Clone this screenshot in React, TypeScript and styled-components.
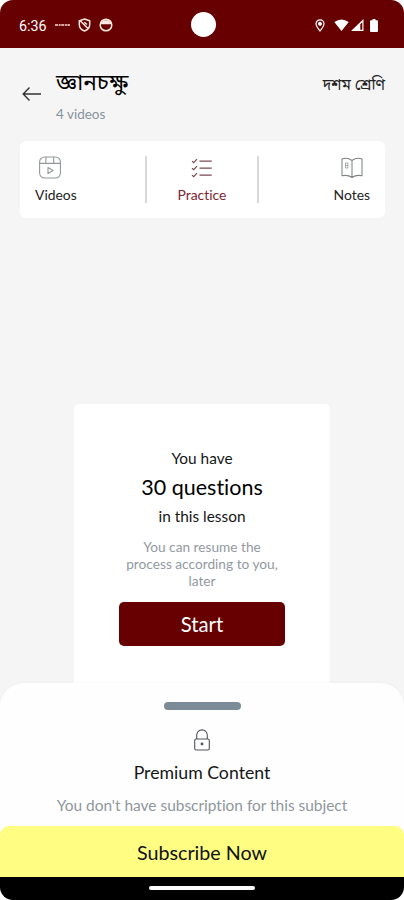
import React from 'react';
import styled, { createGlobalStyle } from 'styled-components';

const maroon = '#670001';

const GlobalStyle = createGlobalStyle`
  * { box-sizing: border-box; }
  html, body { margin: 0; padding: 0; background: #fff; overflow: hidden; }
  button { font: inherit; border: 0; padding: 0; margin: 0; background: none; color: inherit; }
  svg { display: block; flex: none; }
`;

const Screen = styled.div`
  width: 404px;
  height: 900px;
  display: flex;
  flex-direction: column;
  overflow: hidden;
  border-radius: 13px;
  background: #f5f5f5;
  color: #161616;
  font-family: Lato, 'Noto Sans Bengali', 'Noto Sans', sans-serif;
  font-variant-ligatures: no-common-ligatures;
  white-space: nowrap;
`;

const StatusBar = styled.div`
  height: 48px;
  flex: none;
  display: grid;
  grid-template-columns: 1fr 25px 1fr;
  align-items: center;
  padding: 0 26px 0 19px;
  background: ${maroon};
  color: #fff;
`;

const StatusGroup = styled.div<{ $end?: boolean }>`
  display: flex;
  align-items: center;
  justify-content: ${p => (p.$end ? 'flex-end' : 'flex-start')};
  padding-top: 2px;
`;

const Clock = styled.span`
  width: 28px;
  font: 400 14.3px/18px Roboto, sans-serif;
  margin-right: 8px;
  padding-top: 1px;
`;

const Camera = styled.div`
  width: 25px;
  height: 25px;
  border-radius: 50%;
  background: #fff;
  margin-left: 4.5px;
`;

const Header = styled.header`
  height: 93px;
  flex: none;
  display: flex;
  padding: 20px 19px 0 22px;
`;

const BackButton = styled.button`
  width: 20px;
  height: 16px;
  margin: 18px 14px 0 0;
`;

const Title = styled.h1`
  margin: 0;
  height: 36px;
  font-size: 22.6px;
  line-height: 28px;
  font-weight: 400;
  color: #000;
`;

const Count = styled.div`
  font-size: 13.5px;
  line-height: 20px;
  color: #87939b;
`;

const Grade = styled.div`
  margin-left: auto;
  font-size: 15.3px;
  line-height: 32px;
  color: #222;
`;

const Tabs = styled.nav`
  height: 77px;
  flex: none;
  margin: 0 19px 0 20px;
  padding: 0 15px;
  display: grid;
  grid-template-columns: 110px 2px 110px 2px 1fr;
  align-items: center;
  border-radius: 6px;
  background: #fff;
`;

const Tab = styled.button<{ $place: 'start' | 'center' | 'end'; $active?: boolean }>`
  justify-self: ${p => p.$place};
  display: flex;
  flex-direction: column;
  align-items: ${p => (p.$place === 'start' ? 'flex-start' : 'center')};
  gap: 7px;
  font-size: 13.9px;
  line-height: 18px;
  color: ${p => (p.$active ? '#7b2531' : '#222')};
`;

const Divider = styled.span`
  width: 2px;
  height: 47px;
  background: #d7d9e1;
`;

const Body = styled.main`
  flex: 1;
  min-height: 0;
  padding-top: 186px;
  display: flex;
  justify-content: center;
`;

const Card = styled.section`
  width: 256px;
  height: 300px;
  padding-top: 42px;
  display: flex;
  flex-direction: column;
  align-items: center;
  background: #fff;
  border-radius: 5px;
  text-align: center;
`;

const Lead = styled.div`
  font-size: 15.4px;
  line-height: 24px;
`;

const Amount = styled.div`
  font-size: 21.5px;
  line-height: 34px;
  color: #000;
`;

const Hint = styled.p`
  margin: 11px 0 12.6px;
  width: 160px;
  font-size: 13.7px;
  line-height: 16.8px;
  color: #929aa1;
  white-space: normal;
`;

const StartButton = styled.button`
  width: 166px;
  height: 44px;
  border-radius: 5px;
  background: ${maroon};
  color: #fff;
  font-size: 20.3px;
  line-height: 24px;
`;

const Sheet = styled.section`
  height: 217px;
  flex: none;
  z-index: 1;
  display: flex;
  flex-direction: column;
  align-items: center;
  padding-top: 19px;
  border-radius: 24px 24px 0 0;
  background: #fefefe;
  box-shadow: 0 -1px 3px rgba(0, 0, 0, 0.025);
`;

const Handle = styled.div`
  width: 77px;
  height: 8px;
  margin-bottom: 19px;
  border-radius: 4px;
  background: #7b8b98;
`;

const SheetTitle = styled.h2`
  margin: 10px 0 8px;
  font-size: 17.7px;
  line-height: 24px;
  font-weight: 400;
`;

const SheetText = styled.p`
  margin: 0;
  font-size: 15.45px;
  line-height: 24px;
  color: #8f979d;
`;

const Subscribe = styled.button`
  width: 100%;
  height: 51px;
  margin-top: auto;
  flex: none;
  border-radius: 9px 9px 0 0;
  background: #fffe83;
  color: #111;
  font-size: 19.7px;
  padding-top: 1px;
`;

const NavigationBar = styled.div`
  width: 100%;
  height: 23px;
  flex: none;
  display: flex;
  justify-content: center;
  padding-top: 9px;
  background: #000;
`;

const HomeIndicator = styled.div`
  width: 106px;
  height: 4px;
  border-radius: 2px;
  background: #fff;
`;

const Glyph = styled.svg<{ $gap?: number }>`
  margin-right: ${p => p.$gap ?? 0}px;
`;

const ShieldIcon = () => (
  <Glyph $gap={8} width="13" height="14" viewBox="0 0 13 14" fill="none" stroke="#ffe8df" strokeWidth="1.5">
    <path d="M6.5 1 11.7 2.8V6.5C11.7 9.5 9.5 12 6.5 13 3.5 12 1.3 9.5 1.3 6.5V2.8ZM2.5 3 10.2 10.8M6.3 4.2 9 6.5" />
  </Glyph>
);

const FaceIcon = () => (
  <Glyph width="14" height="14" viewBox="0 0 14 14" fill="none" stroke="#ffe8df" strokeWidth="1.5">
    <circle cx="7" cy="7" r="5.8" />
    <path d="M2 5.2h10M3.2 3.3h7.6" strokeWidth="2" />
  </Glyph>
);

const StatusIcons = () => (
  <>
    <Glyph $gap={9} width="10" height="13" viewBox="0 0 10 13" fill="none" stroke="#fff" strokeWidth="1.2">
      <path d="M5 12C3.5 10 1 7.4 1 4.8A4 4 0 0 1 9 4.8C9 7.4 6.5 10 5 12Z" />
      <circle cx="5" cy="4.8" r="1.4" fill="#fff" />
    </Glyph>
    <Glyph $gap={2} width="15" height="12" viewBox="0 0 15 12" fill="#fff">
      <path d="M.3 3Q7.5-2 14.7 3L7.5 12Z" />
    </Glyph>
    <Glyph $gap={6} width="13" height="12" viewBox="0 0 13 12" fill="#fff">
      <path fillRule="evenodd" d="M0 12 12.5 0V12ZM9.3 5.2V10.8H11.3V3.2Z" />
    </Glyph>
    <Glyph width="8" height="13" viewBox="0 0 8 13" fill="#fff">
      <path d="M2.5 0h3v1.2H7q1 0 1 1V12q0 1-1 1H1q-1 0-1-1V2.2q0-1 1-1h1.5Z" />
    </Glyph>
  </>
);

const ReelIcon = () => (
  <svg width="30" height="23" viewBox="0 0 30 23" fill="none" stroke="#92989a" strokeWidth="1.1">
    <rect x="4.6" y="1" width="20.8" height="21" rx="5" />
    <path d="M4.6 7.4h20.8M11 1l-.2 6.4M18.7 1v6.4M13 11.5v6l5-3Z" strokeLinejoin="round" />
  </svg>
);

const ChecklistIcon = () => (
  <svg width="22" height="23" viewBox="0 0 22 23" fill="none" stroke="#7b4951" strokeWidth="1.2">
    <path d="M1 5.1 2.7 6.7 6 3.2M1 12.1 2.7 13.7 6 10.2M1 19.1 2.7 20.7 6 17.2" />
    <path d="M8.5 5.1h12.2M8.5 12.1h12.2M8.5 19.1h12.2" />
  </svg>
);

const BookIcon = () => (
  <svg width="22" height="23" viewBox="0 0 22 23" fill="none" stroke="#7e8582" strokeWidth="1.05">
    <path d="M1 3Q6.5 1 11 4.5V21.5Q7 18.5 1 19.7ZM11 4.5Q15.5 1 21 3V19.7Q15 18.5 11 21.5Z" strokeLinejoin="round" />
    <path d="M4.5 7h2.4v5H4.5ZM4.5 9.5h2.4" strokeWidth=".65" />
  </svg>
);

const LockIcon = () => (
  <svg width="18" height="22" viewBox="0 0 18 22" fill="none" stroke="#50535a" strokeWidth="1.1">
    <rect x="1.7" y="10" width="14.6" height="11" rx="1.4" />
    <path d="M3.7 10V6.2a5.3 5.3 0 0 1 10.6 0V10" />
    <circle cx="9" cy="15" r=".9" fill="#50535a" />
  </svg>
);

export default function App() {
  return (
    <Screen>
      <GlobalStyle />
      <StatusBar>
        <StatusGroup>
          <Clock>6:36</Clock>
          <Glyph $gap={8} width="15" height="4" viewBox="0 0 15 4">
            <path d="M0 2h15" stroke="#ffdcd5" strokeWidth="2" strokeDasharray="3 .7 2 .5" opacity=".75" />
          </Glyph>
          <ShieldIcon />
          <FaceIcon />
        </StatusGroup>
        <Camera />
        <StatusGroup $end><StatusIcons /></StatusGroup>
      </StatusBar>
      <Header>
        <BackButton aria-label="Back">
          <svg width="20" height="16" viewBox="0 0 20 16" fill="none" stroke="#333" strokeWidth="1.4">
            <path d="M19 8H1.5M7.5 1.5 1.2 8l6.3 6.5" />
          </svg>
        </BackButton>
        <div>
          <Title>জ্ঞানচক্ষু</Title>
          <Count>4 videos</Count>
        </div>
        <Grade>দশম শ্রেণি</Grade>
      </Header>
      <Tabs>
        <Tab $place="start"><ReelIcon />Videos</Tab>
        <Divider />
        <Tab $place="center" $active><ChecklistIcon />Practice</Tab>
        <Divider />
        <Tab $place="end"><BookIcon />Notes</Tab>
      </Tabs>
      <Body>
        <Card>
          <Lead>You have</Lead>
          <Amount>30 questions</Amount>
          <Lead>in this lesson</Lead>
          <Hint>You can resume the process according to you, later</Hint>
          <StartButton>Start</StartButton>
        </Card>
      </Body>
      <Sheet>
        <Handle />
        <LockIcon />
        <SheetTitle>Premium Content</SheetTitle>
        <SheetText>You don't have subscription for this subject</SheetText>
        <Subscribe>Subscribe Now</Subscribe>
        <NavigationBar><HomeIndicator /></NavigationBar>
      </Sheet>
    </Screen>
  );
}
